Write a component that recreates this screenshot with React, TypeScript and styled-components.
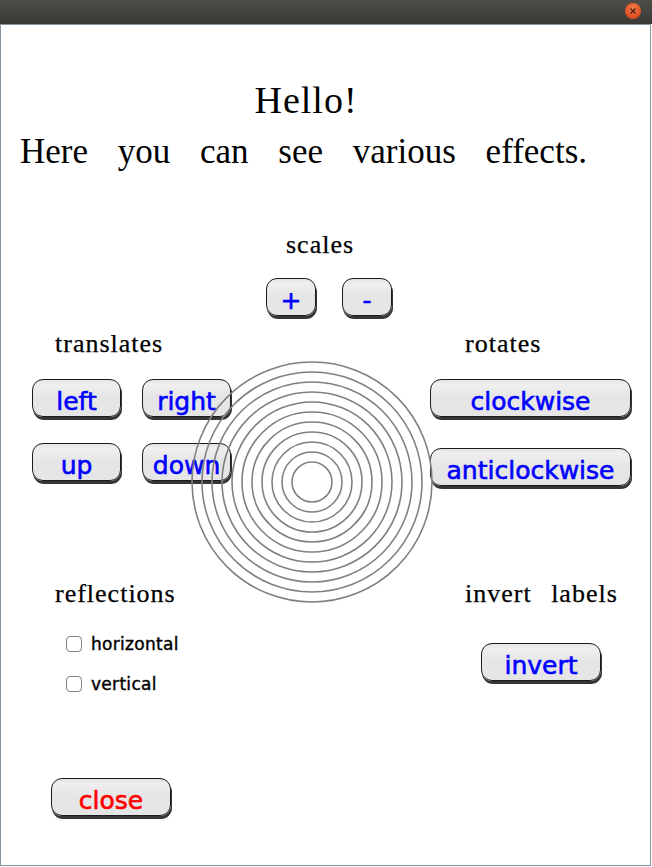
import React from "react";
import styled, { createGlobalStyle } from "styled-components";

const Global = createGlobalStyle`
  html, body { margin: 0; padding: 0; background: #ffffff; }
  body { width: 652px; height: 867px; overflow: hidden; }
`;

const Shell = styled.div`
  width: 652px;
  height: 867px;
  display: flex;
  flex-direction: column;
`;

const TitleBar = styled.div`
  height: 24px;
  flex: none;
  box-sizing: border-box;
  background: linear-gradient(#4e4d48, #3a3935);
  display: flex;
  align-items: center;
  justify-content: flex-end;
  padding-right: 11px;
`;

const CloseDot = styled.div`
  width: 16px;
  height: 16px;
  border-radius: 50%;
  margin-top: -2px;
  background: radial-gradient(circle at 50% 35%, #f47c4c, #de4e1f 70%, #c9441a);
  display: flex;
  align-items: center;
  justify-content: center;
`;

const Window = styled.div`
  width: 651px;
  height: 842px;
  box-sizing: border-box;
  border: 1px solid #8795a0;
  background: #ffffff;
  display: flex;
  flex-direction: column;
`;

const Header = styled.header`
  margin: 53px 0 0 19px;
  width: 567px;
  font-family: "Liberation Serif", serif;
  color: #000;
`;

const Hello = styled.div`
  font-size: 38px;
  line-height: 44px;
  letter-spacing: 1px;
  text-align: center;
  padding-left: 5px;
`;

const Intro = styled.div`
  margin-top: 10px;
  font-size: 35px;
  line-height: 40px;
  text-align: justify;
  text-align-last: justify;
`;

const Label = styled.div<{ $indent?: number; $mt?: number }>`
  font-family: "Liberation Serif", serif;
  font-size: 26px;
  line-height: 30px;
  letter-spacing: 1px;
  word-spacing: 12px;
  color: #000;
  -webkit-text-stroke: 0.25px #000;
  margin-top: ${(p) => p.$mt ?? 0}px;
  padding-left: ${(p) => p.$indent ?? 0}px;
  white-space: nowrap;
`;

const ScaleSection = styled.section`
  margin: 58px 0 0 265px;
  display: flex;
  flex-direction: column;
`;

const ScaleRow = styled.div`
  margin-top: 18px;
  display: flex;
  gap: 26px;
`;

const Btn = styled.button<{ $w?: number; $red?: boolean; $mt?: number; $ml?: number }>`
  box-sizing: border-box;
  width: ${(p) => (p.$w ? `${p.$w}px` : "100%")};
  height: 38px;
  margin: ${(p) => p.$mt ?? 0}px 0 0 ${(p) => p.$ml ?? 0}px;
  padding: 7px 0 0;
  border: 1px solid #1c1c1c;
  border-radius: 11px;
  background: linear-gradient(#e3e3e3 0%, #efefef 12%, #ececec 25%, #e6e6e6 45%, #e5e5e5 100%);
  box-shadow: 1px 3px 0 #353535;
  font-family: "DejaVu Sans", sans-serif;
  font-size: 25px;
  line-height: 29px;
  color: ${(p) => (p.$red ? "#ff0000" : "#0000ff")};
  -webkit-text-stroke: 0.6px ${(p) => (p.$red ? "#ff0000" : "#0000ff")};
  text-align: center;
  white-space: nowrap;
  overflow: visible;
  cursor: pointer;
`;

const Panels = styled.div`
  position: relative;
  margin-top: 13px;
  padding-left: 31px;
  display: grid;
  grid-template-columns: 200px 198px 201px;
  align-items: start;
`;

const Column = styled.div`
  display: flex;
  flex-direction: column;
  align-items: flex-start;
`;

const RightColumn = styled(Column)`
  grid-column: 3;
`;

const MoveGrid = styled.div`
  margin: 20px 0 98px;
  display: grid;
  grid-template-columns: 89px 89px;
  column-gap: 21px;
  row-gap: 26px;
`;

const CheckList = styled.div`
  margin-top: 23px;
  padding-left: 34px;
  display: flex;
  flex-direction: column;
  gap: 16px;
`;

const CheckRow = styled.label`
  height: 24px;
  display: flex;
  align-items: center;
  gap: 9px;
  font-family: "DejaVu Sans", sans-serif;
  font-size: 17px;
  line-height: 24px;
  letter-spacing: 0.3px;
  color: #000;
  -webkit-text-stroke: 0.4px #000;
`;

const Box = styled.input`
  appearance: none;
  margin: 0;
  width: 16px;
  height: 16px;
  box-sizing: border-box;
  border: 1px solid #86808c;
  border-radius: 4px;
  background: #fff;
`;

const Rings = styled.svg`
  position: absolute;
  left: 189px;
  top: 31px;
  pointer-events: none;
`;

const radii = [20, 30, 40, 50, 60, 70, 80, 90, 100, 110, 120];

export default function App() {
  return (
    <Shell>
      <Global />
      <TitleBar>
        <CloseDot>
          <svg width="8" height="8" viewBox="0 0 8 8">
            <path d="M1.5 1.5 L6.5 6.5 M6.5 1.5 L1.5 6.5" stroke="#4a1c0c" strokeWidth="1.2" />
          </svg>
        </CloseDot>
      </TitleBar>
      <Window>
        <Header>
          <Hello>Hello!</Hello>
          <Intro>Here you can see various effects.</Intro>
        </Header>

        <ScaleSection>
          <Label $indent={20}>scales</Label>
          <ScaleRow>
            <Btn $w={50}>+</Btn>
            <Btn $w={50}>-</Btn>
          </ScaleRow>
        </ScaleSection>

        <Panels>
          <Column>
            <Label $indent={23}>translates</Label>
            <MoveGrid>
              <Btn>left</Btn>
              <Btn>right</Btn>
              <Btn>up</Btn>
              <Btn>down</Btn>
            </MoveGrid>
            <Label $indent={23}>reflections</Label>
            <CheckList>
              <CheckRow>
                <Box type="checkbox" />
                horizontal
              </CheckRow>
              <CheckRow>
                <Box type="checkbox" />
                vertical
              </CheckRow>
            </CheckList>
            <Btn $w={120} $red $mt={82} $ml={19}>close</Btn>
          </Column>

          <RightColumn>
            <Label $indent={35}>rotates</Label>
            <Btn $mt={20}>clockwise</Btn>
            <Btn $mt={31}>anticlockwise</Btn>
            <Label $indent={35} $mt={93}>invert labels</Label>
            <Btn $w={120} $mt={34} $ml={51}>invert</Btn>
          </RightColumn>

          <Rings width="244" height="244" viewBox="0 0 244 244">
            {radii.map((r) => (
              <circle key={r} cx="122" cy="122" r={r} fill="none" stroke="#808080" strokeWidth="1.6" />
            ))}
          </Rings>
        </Panels>
      </Window>
    </Shell>
  );
}
